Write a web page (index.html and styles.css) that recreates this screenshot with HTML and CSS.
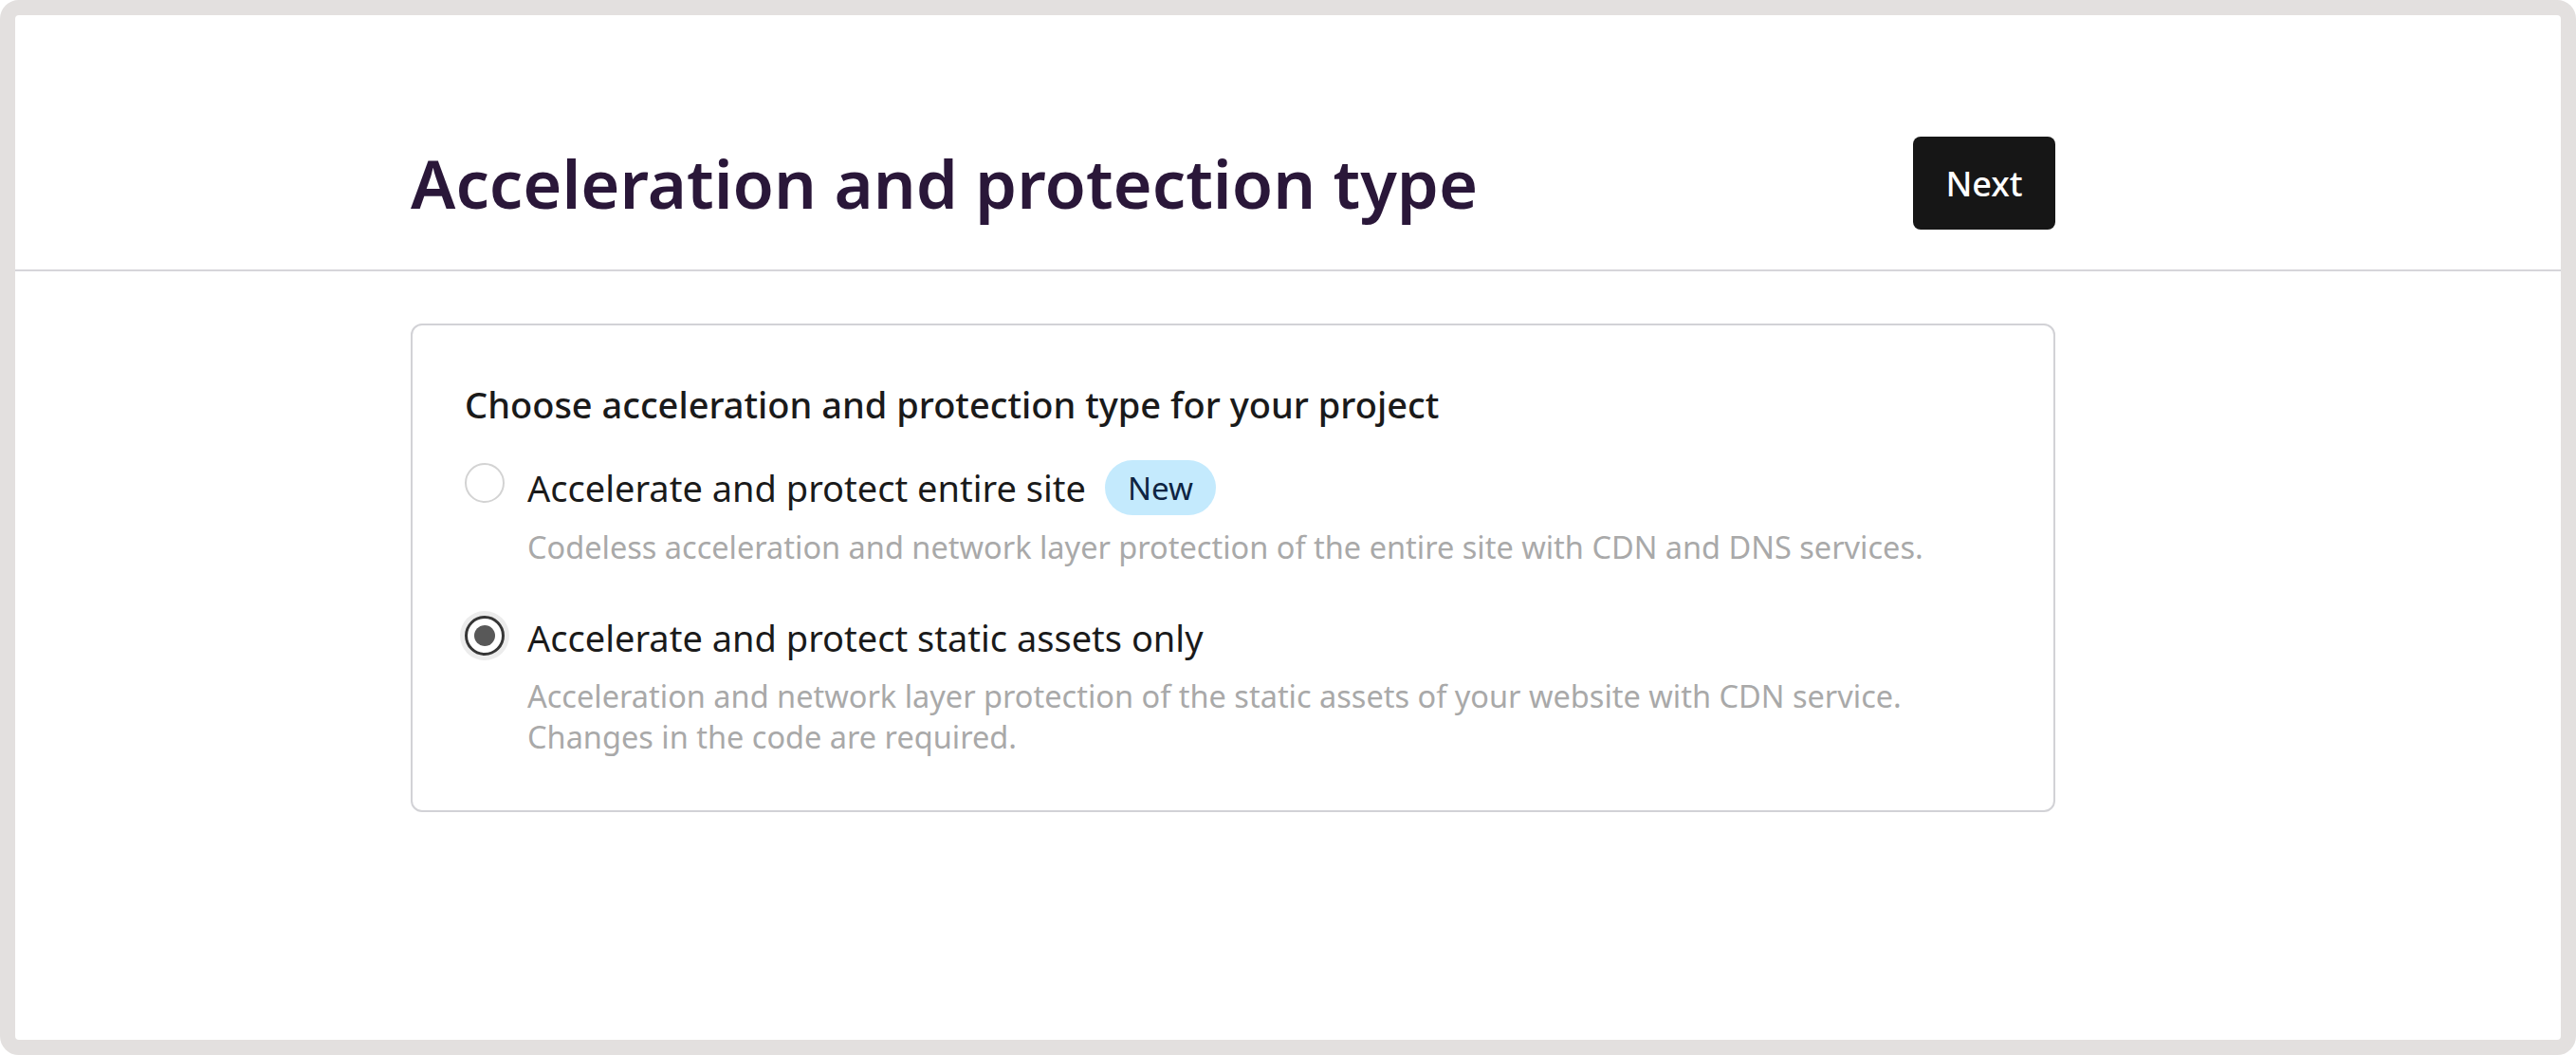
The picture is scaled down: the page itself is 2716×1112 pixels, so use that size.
FILE: index.html
```html
<!DOCTYPE html>
<html lang="en">
<head>
<meta charset="utf-8">
<title>Acceleration and protection type</title>
<link rel="stylesheet" href="styles.css">
</head>
<body>
<div class="frame">
  <header class="header">
    <div class="header-inner">
      <h1 class="title">Acceleration and protection type</h1>
      <button class="btn-next" type="button">Next</button>
    </div>
  </header>
  <main class="content">
    <section class="card">
      <h2 class="card-title">Choose acceleration and protection type for your project</h2>
      <div class="option">
        <span class="radio"></span>
        <div class="option-body">
          <div class="option-label">Accelerate and protect entire site <span class="badge">New</span></div>
          <p class="option-desc">Codeless acceleration and network layer protection of the entire site with CDN and DNS services.</p>
        </div>
      </div>
      <div class="option option-second">
        <span class="radio radio-checked"><span class="radio-dot"></span></span>
        <div class="option-body">
          <div class="option-label">Accelerate and protect static assets only</div>
          <p class="option-desc option-desc-second">Acceleration and network layer protection of the static assets of your website with CDN service.<br>Changes in the code are required.</p>
        </div>
      </div>
    </section>
  </main>
</div>
</body>
</html>
```

FILE: styles.css
```css
* { box-sizing: border-box; }
html, body { margin: 0; padding: 0; background: #ffffff; }
body {
  font-family: "Noto Sans", "Open Sans", sans-serif;
  width: 2716px;
  height: 1112px;
}
.frame {
  width: 2716px;
  height: 1112px;
  border: 16px solid #e3e0df;
  border-radius: 20px;
  background: #ffffff;
  overflow: hidden;
}
.header {
  border-bottom: 2px solid #d6d5da;
  padding: 128px 0 42px;
}
.header-inner {
  margin-left: 417px;
  width: 1734px;
  display: flex;
  align-items: center;
  justify-content: space-between;
}
.title {
  margin: 0;
  font-size: 70.5px;
  line-height: 98px;
  font-weight: 600;
  color: #2a1739;
  letter-spacing: 0;
}
.btn-next {
  width: 150px;
  height: 98px;
  border: none;
  border-radius: 8px;
  background: #161616;
  color: #ffffff;
  font-family: "Noto Sans", "Open Sans", sans-serif;
  font-size: 36px;
  font-weight: 500;
  padding: 0;
}
.content {
  padding-top: 55px;
}
.card {
  margin-left: 417px;
  width: 1734px;
  border: 2px solid #d2d2d6;
  border-radius: 12px;
  padding: 57px 56px 56px 55px;
}
.card-title {
  margin: 0 0 33px;
  font-size: 38px;
  line-height: 52px;
  font-weight: 500;
  color: #1a1a1a;
}
.option {
  display: flex;
  align-items: flex-start;
  gap: 24px;
}
.option-second {
  margin-top: 48px;
}
.radio {
  flex: none;
  width: 42px;
  height: 42px;
  margin-top: 3px;
  border: 2px solid #d3d3d3;
  border-radius: 50%;
  display: flex;
  align-items: center;
  justify-content: center;
  background: #fff;
}
.radio-checked {
  border: 3px solid #363636;
  box-shadow: 0 0 0 5px #ececec;
}
.radio-dot {
  width: 22px;
  height: 22px;
  border-radius: 50%;
  background: #585858;
}
.option-body {
  flex: 1;
}
.option-label {
  display: flex;
  align-items: center;
  gap: 20px;
  font-size: 38px;
  line-height: 52px;
  color: #1a1a1a;
}
.badge {
  display: inline-flex;
  align-items: center;
  height: 58px;
  padding: 0 24px;
  border-radius: 29px;
  background: #c4eafd;
  color: #0e2442;
  font-size: 33px;
  line-height: 1;
}
.option-desc {
  margin: 12px 0 0;
  font-size: 32.5px;
  line-height: 43px;
  color: #a9a9a9;
}
.option-desc-second {
  margin-top: 14px;
}
```
